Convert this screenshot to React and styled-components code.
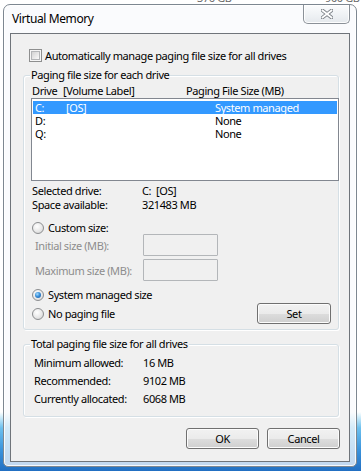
import React from "react";
import styled, { createGlobalStyle } from "styled-components";

const GlobalStyle = createGlobalStyle`
  html, body {
    margin: 0;
    padding: 0;
  }
  body {
    width: 361px;
    height: 471px;
    overflow: hidden;
    background: linear-gradient(180deg, #ffffff 0px, #ffffff 412px, #d9f1fb 416px, #6cc0ee 428px, #3a93dc 450px, #226fc2 471px);
    font-family: "Noto Sans", "Open Sans", sans-serif;
    font-size: 11px;
    letter-spacing: -0.4px;
    color: #000;
  }
`;

const drives = [
    { letter: "C:", label: "[OS]", size: "System managed", selected: true },
    { letter: "D:", label: "", size: "None" },
    { letter: "Q:", label: "", size: "None" },
];

const totals = [
    { label: "Minimum allowed:", value: "16 MB" },
    { label: "Recommended:", value: "9102 MB" },
    { label: "Currently allocated:", value: "6068 MB" },
];

const CloseGlyph = () => (
    <svg width="12" height="10" viewBox="0 0 12 10">
        <path d="M1.5 1.5 L10.5 8.5 M10.5 1.5 L1.5 8.5" stroke="#7d8288" strokeWidth="3.6" strokeLinecap="square" />
        <path d="M1.5 1.5 L10.5 8.5 M10.5 1.5 L1.5 8.5" stroke="#ffffff" strokeWidth="1.7" strokeLinecap="square" />
    </svg>
);

export default function App() {
    return (
        <>
            <GlobalStyle />
            <Backdrop>
                <BackdropText $width={128}>376 GB</BackdropText>
                <BackdropText>900 GB</BackdropText>
            </Backdrop>
            <Window>
                <TitleBar>
                    <Title>Virtual Memory</Title>
                    <CloseButton>
                        <CloseGlyph />
                    </CloseButton>
                </TitleBar>
                <Client>
                    <CheckRow>
                        <CheckBox />
                        <span>Automatically manage paging file size for all drives</span>
                    </CheckRow>

                    <Group $gap={13} $bottom={5}>
                        <Legend>Paging file size for each drive</Legend>
                        <ListHeader>
                            <span>Drive</span>
                            <span>[Volume Label]</span>
                            <span>Paging File Size (MB)</span>
                        </ListHeader>
                        <DriveList>
                            {drives.map((d) => (
                                <DriveRow key={d.letter} $selected={d.selected}>
                                    <span>{d.letter}</span>
                                    <span>{d.label}</span>
                                    <span>{d.size}</span>
                                </DriveRow>
                            ))}
                        </DriveList>
                        <InfoRow $gap={3}>
                            <span>Selected drive:</span>
                            <span>C:&nbsp;&nbsp;[OS]</span>
                        </InfoRow>
                        <InfoRow>
                            <span>Space available:</span>
                            <span>321483 MB</span>
                        </InfoRow>
                        <RadioRow $gap={9}>
                            <Radio />
                            <span>Custom size:</span>
                        </RadioRow>
                        <FieldRow>
                            <FieldLabel>Initial size (MB):</FieldLabel>
                            <TextBox />
                        </FieldRow>
                        <FieldRow $gap={3}>
                            <FieldLabel>Maximum size (MB):</FieldLabel>
                            <TextBox />
                        </FieldRow>
                        <RadioRow $gap={7}>
                            <Radio $checked />
                            <span>System managed size</span>
                        </RadioRow>
                        <SetRow>
                            <RadioRow>
                                <Radio />
                                <span>No paging file</span>
                            </RadioRow>
                            <Button $width={74}>Set</Button>
                        </SetRow>
                    </Group>

                    <Group $gap={14} $bottom={8}>
                        <Legend>Total paging file size for all drives</Legend>
                        <TotalList>
                            {totals.map((t) => (
                                <TotalRow key={t.label}>
                                    <span>{t.label}</span>
                                    <span>{t.value}</span>
                                </TotalRow>
                            ))}
                        </TotalList>
                    </Group>

                    <ButtonRow>
                        <Button $width={73}>OK</Button>
                        <Button $width={73}>Cancel</Button>
                    </ButtonRow>
                </Client>
            </Window>
        </>
    );
}

const Backdrop = styled.div`
    height: 4px;
    overflow: hidden;
    display: flex;
    padding-left: 197px;
`;

const BackdropText = styled.span`
    width: ${(p) => (p.$width ? `${p.$width}px` : "auto")};
    margin-top: -9px;
    line-height: 13px;
    color: #6a6a6a;
    white-space: nowrap;
`;

const Window = styled.div`
    margin-left: 3px;
    width: 354px;
    height: 463px;
    box-sizing: border-box;
    border: 1px solid #7d8791;
    border-radius: 7px 7px 5px 5px;
    background: rgba(248, 250, 252, 0.74);
    box-shadow: inset 0 0 0 1px rgba(255, 255, 255, 0.85);
    display: flex;
    flex-direction: column;
`;

const TitleBar = styled.div`
    height: 28px;
    display: flex;
    justify-content: space-between;
    align-items: flex-start;
`;

const Title = styled.div`
    padding-left: 8px;
    line-height: 28px;
    font-size: 12px;
    color: #000;
`;

const CloseButton = styled.div`
    width: 47px;
    height: 19px;
    margin-right: 6px;
    box-sizing: border-box;
    border: 1px solid #8b9198;
    border-top: none;
    border-radius: 0 0 5px 5px;
    background: linear-gradient(180deg, #fbfcfd 0%, #eef1f4 60%, #e4e8ec 100%);
    box-shadow: inset 0 0 0 1px rgba(255, 255, 255, 0.9);
    display: flex;
    align-items: center;
    justify-content: center;
`;

const Client = styled.div`
    margin: 0 6px;
    height: 429px;
    box-sizing: border-box;
    border: 1px solid #6f747a;
    background: #f0f0f0;
    padding: 0 10px 0 12px;
    display: flex;
    flex-direction: column;
`;

const CheckRow = styled.div`
    margin-top: 15px;
    height: 13px;
    padding-left: 6px;
    display: flex;
    align-items: center;
    gap: 3px;
    line-height: 13px;
`;

const CheckBox = styled.span`
    width: 13px;
    height: 13px;
    box-sizing: border-box;
    border: 1px solid #8e8f8f;
    background: #f6f6f6;
    padding: 1px;
    flex-shrink: 0;

    &::after {
        content: "";
        display: block;
        width: 100%;
        height: 100%;
        box-sizing: border-box;
        border: 1px solid #b4b6b8;
        background: linear-gradient(135deg, #d3d3d3 0%, #eaeaea 60%, #fafafa 100%);
    }
`;

const Group = styled.div`
    margin-top: ${(p) => p.$gap}px;
    padding-bottom: ${(p) => p.$bottom}px;
    border: 1px solid #d5dfe5;
    border-radius: 3px;
    box-shadow: inset 1px 1px 0 #ffffff, 1px 1px 0 #ffffff;
    display: flex;
    flex-direction: column;
`;

const Legend = styled.div`
    align-self: flex-start;
    margin: -8px 0 0 6px;
    padding: 0 1px;
    line-height: 13px;
    background: #f0f0f0;
`;

const ListHeader = styled.div`
    margin-top: 3px;
    padding-left: 8px;
    display: grid;
    grid-template-columns: 31px 123px auto;
    line-height: 13px;
`;

const DriveList = styled.div`
    margin: 1px -1px 0 7px;
    height: 83px;
    box-sizing: border-box;
    border: 1px solid #828790;
    background: #ffffff;
    padding: 2px 1px 0;
`;

const DriveRow = styled.div`
    height: 13px;
    line-height: 13px;
    padding-left: 2px;
    display: grid;
    grid-template-columns: 31px 149px auto;
    background: ${(p) => (p.$selected ? "#3399ff" : "transparent")};
    color: ${(p) => (p.$selected ? "#ffffff" : "#000000")};
`;

const InfoRow = styled.div`
    margin-top: ${(p) => p.$gap || 0}px;
    padding-left: 8px;
    display: grid;
    grid-template-columns: 110px auto;
    line-height: 14px;
`;

const RadioRow = styled.div`
    margin-top: ${(p) => p.$gap || 0}px;
    height: 13px;
    padding-left: 8px;
    display: flex;
    align-items: center;
    gap: 4px;
    line-height: 13px;
`;

const Radio = styled.span`
    width: 12px;
    height: 12px;
    box-sizing: border-box;
    border-radius: 50%;
    border: 1px solid #8c8e90;
    background: radial-gradient(circle at 40% 35%, #ffffff 0%, #e8e8e8 55%, #cdcdcd 100%);
    display: flex;
    align-items: center;
    justify-content: center;
    flex-shrink: 0;

    &::after {
        content: "";
        display: ${(p) => (p.$checked ? "block" : "none")};
        width: 6px;
        height: 6px;
        border-radius: 50%;
        background: radial-gradient(circle at 38% 35%, #a6dcff 0%, #3a8fd8 45%, #16539e 100%);
    }
`;

const FieldRow = styled.div`
    margin-top: ${(p) => p.$gap || 0}px;
    height: 22px;
    padding-left: 11px;
    display: grid;
    grid-template-columns: 108px 75px;
    align-items: center;
`;

const FieldLabel = styled.span`
    color: #8d8d8d;
`;

const TextBox = styled.div`
    height: 22px;
    box-sizing: border-box;
    border: 1px solid #b3b6b9;
    border-radius: 1px;
    background: #f0f0f0;
`;

const SetRow = styled.div`
    margin-top: 2px;
    height: 21px;
    padding-right: 7px;
    display: flex;
    justify-content: space-between;
    align-items: center;
`;

const Button = styled.button`
    width: ${(p) => p.$width}px;
    height: 21px;
    box-sizing: border-box;
    padding: 0;
    border: 1px solid #707070;
    border-radius: 3px;
    background: linear-gradient(180deg, #f2f2f2 0%, #ebebeb 50%, #dddddd 51%, #cfcfcf 100%);
    box-shadow: inset 0 0 0 1px #fcfcfc;
    font: inherit;
    letter-spacing: inherit;
    color: #000;
`;

const TotalList = styled.div`
    margin-top: 4px;
    padding-left: 10px;
`;

const TotalRow = styled.div`
    display: grid;
    grid-template-columns: 109px auto;
    line-height: 18px;
`;

const ButtonRow = styled.div`
    margin: 11px -1px 0 0;
    display: flex;
    justify-content: flex-end;
    gap: 8px;
`;
